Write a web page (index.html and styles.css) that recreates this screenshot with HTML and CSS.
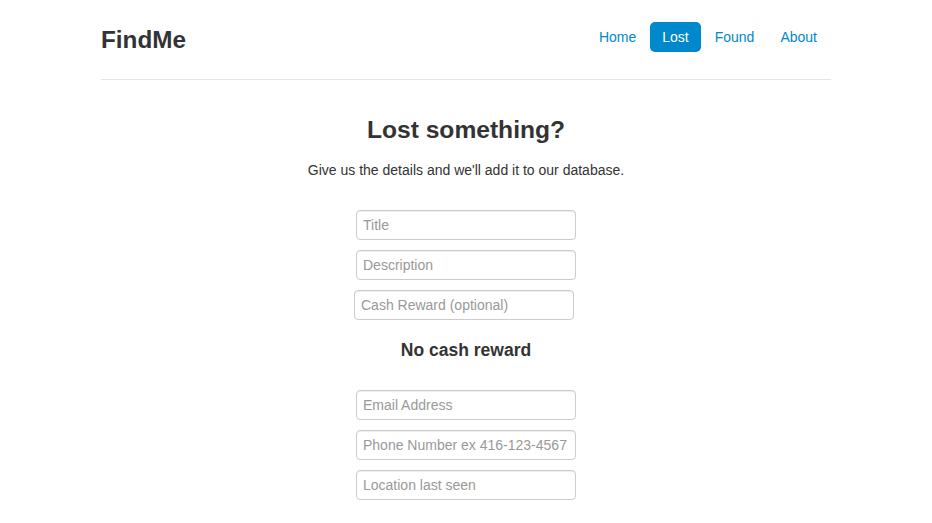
FILE: index.html
```html
<!DOCTYPE html>
<html>
<head>
<meta charset="utf-8">
<title>FindMe</title>
<link rel="stylesheet" href="styles.css">
</head>
<body>
<div class="container">
  <header class="header">
    <h3 class="brand">FindMe</h3>
    <ul class="pills">
      <li><a href="#">Home</a></li>
      <li class="active"><a href="#">Lost</a></li>
      <li><a href="#">Found</a></li>
      <li><a href="#">About</a></li>
    </ul>
  </header>
  <main class="main">
    <h1 class="title">Lost something?</h1>
    <p class="lead">Give us the details and we'll add it to our database.</p>
    <form class="form">
      <input class="field" type="text" placeholder="Title">
      <input class="field" type="text" placeholder="Description">
      <input class="field field-shift" type="text" placeholder="Cash Reward (optional)">
      <h4 class="reward">No cash reward</h4>
      <input class="field" type="text" placeholder="Email Address">
      <input class="field" type="text" placeholder="Phone Number ex 416-123-4567">
      <input class="field" type="text" placeholder="Location last seen">
    </form>
  </main>
</div>
</body>
</html>
```
FILE: styles.css
```css
* { box-sizing: border-box; }
html, body { margin: 0; padding: 0; background: #fff; }
body {
  font-family: "Liberation Sans", Arial, sans-serif;
  font-size: 14px;
  line-height: 20px;
  color: #333;
}
.container {
  width: 730px;
  margin: 0 auto;
}
.header {
  display: flex;
  justify-content: space-between;
  align-items: flex-start;
  height: 80px;
  border-bottom: 1px solid #e5e5e5;
  padding-top: 22px;
}
.brand {
  margin: 3px 0 0;
  font-size: 24.3px;
  line-height: 30px;
  font-weight: bold;
  color: #333;
}
.pills {
  list-style: none;
  margin: 0 2px 0 0;
  padding: 0;
  display: flex;
  gap: 2px;
}
.pills a {
  display: block;
  padding: 8px 12px;
  line-height: 14px;
  border-radius: 5px;
  color: #0088cc;
  text-decoration: none;
}
.pills .active a {
  background: #0088cc;
  color: #fff;
}
.main {
  display: flex;
  flex-direction: column;
  align-items: center;
}
.title {
  margin: 37px 0 0;
  font-size: 24.6px;
  line-height: 26px;
  font-weight: bold;
  color: #333;
}
.lead {
  margin: 17px 0 0;
  font-size: 14px;
  line-height: 20px;
}
.form {
  margin-top: 30px;
  display: flex;
  flex-direction: column;
  align-items: center;
  gap: 10px;
}
.field {
  width: 220px;
  height: 30px;
  padding: 4px 6px;
  border: 1px solid #ccc;
  border-radius: 4px;
  font-family: "Liberation Sans", Arial, sans-serif;
  font-size: 14px;
  color: #555;
  box-shadow: inset 0 1px 1px rgba(0,0,0,0.075);
}
.field::placeholder { color: #999; }
.field-shift { margin-right: 4px; }
.reward {
  margin: 11px 0 20px;
  font-size: 17.5px;
  line-height: 19px;
  font-weight: bold;
  color: #333;
}
```
